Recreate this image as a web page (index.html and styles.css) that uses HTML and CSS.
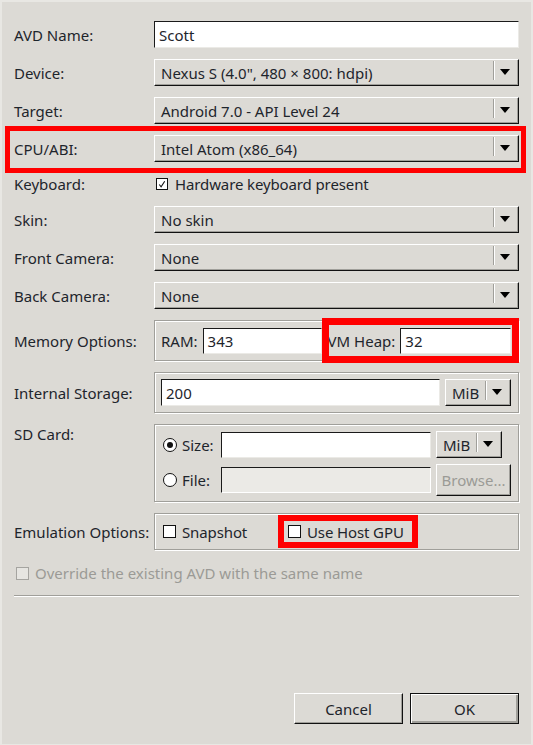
FILE: index.html
```html
<!DOCTYPE html>
<html>
<head>
<meta charset="utf-8">
<link rel="stylesheet" href="styles.css">
</head>
<body>
<div class="dialog">
  <div class="form">
    <div class="row h27">
      <span class="lbl">AVD Name:</span>
      <div class="field"><div class="input full">Scott</div></div>
    </div>
    <div class="row h27">
      <span class="lbl">Device:</span>
      <div class="field"><div class="combo"><span class="combo-text">Nexus S (4.0", 480 × 800: hdpi)</span><span class="combo-sep"></span><span class="combo-arrow"></span></div></div>
    </div>
    <div class="row h27">
      <span class="lbl">Target:</span>
      <div class="field"><div class="combo"><span class="combo-text">Android 7.0 - API Level 24</span><span class="combo-sep"></span><span class="combo-arrow"></span></div></div>
    </div>
    <div class="row h27 mark mark-cpu">
      <span class="lbl">CPU/ABI:</span>
      <div class="field"><div class="combo"><span class="combo-text">Intel Atom (x86_64)</span><span class="combo-sep"></span><span class="combo-arrow"></span></div></div>
    </div>
    <div class="row h22">
      <span class="lbl">Keyboard:</span>
      <div class="field check-field">
        <span class="cb kb"><svg width="11" height="11" viewBox="0 0 11 11"><polyline points="2.5,5.5 4.5,8 8.5,2" fill="none" stroke="#111" stroke-width="1.2"/></svg></span>
        <span class="tight">Hardware keyboard present</span>
      </div>
    </div>
    <div class="row h27">
      <span class="lbl">Skin:</span>
      <div class="field"><div class="combo"><span class="combo-text">No skin</span><span class="combo-sep"></span><span class="combo-arrow"></span></div></div>
    </div>
    <div class="row h27">
      <span class="lbl">Front Camera:</span>
      <div class="field"><div class="combo"><span class="combo-text">None</span><span class="combo-sep"></span><span class="combo-arrow"></span></div></div>
    </div>
    <div class="row h27">
      <span class="lbl">Back Camera:</span>
      <div class="field"><div class="combo"><span class="combo-text">None</span><span class="combo-sep"></span><span class="combo-arrow"></span></div></div>
    </div>
    <div class="row">
      <span class="lbl">Memory Options:</span>
      <div class="field group mem">
        <span>RAM:</span>
        <div class="input ram">343</div>
        <div class="vm mark mark-vm">
          <span>VM Heap:</span>
          <div class="input grow">32</div>
        </div>
      </div>
    </div>
    <div class="row">
      <span class="lbl">Internal Storage:</span>
      <div class="field group store">
        <div class="input h27i grow">200</div>
        <div class="combo small"><span class="combo-text">MiB</span><span class="combo-sep"></span><span class="combo-arrow"></span></div>
      </div>
    </div>
    <div class="row row-top">
      <span class="lbl">SD Card:</span>
      <div class="field group sd">
        <div class="opt"><span class="radio on"></span><span>Size:</span></div>
        <div class="input">&nbsp;</div>
        <div class="combo small"><span class="combo-text">MiB</span><span class="combo-sep"></span><span class="combo-arrow"></span></div>
        <div class="opt"><span class="radio"></span><span>File:</span></div>
        <div class="input disabled">&nbsp;</div>
        <div class="btn browse">Browse...</div>
      </div>
    </div>
    <div class="row">
      <span class="lbl">Emulation Options:</span>
      <div class="field group emu">
        <div class="opt snap"><span class="cb"></span><span class="tight">Snapshot</span></div>
        <div class="opt gpu mark mark-gpu"><span class="cb"></span><span class="tight">Use Host GPU</span></div>
      </div>
    </div>
    <div class="row h24 override">
      <span class="cb off"></span><span>Override the existing AVD with the same name</span>
    </div>
  </div>
  <div class="separator"></div>
  <div class="footer">
    <div class="btn">Cancel</div>
    <div class="btn default">OK</div>
  </div>
</div>
</body>
</html>
```

FILE: styles.css
```css
* { box-sizing: border-box; }
html, body { margin: 0; padding: 0; }
body {
  background: #dcdad5;
  font-family: "Noto Sans", "Open Sans", sans-serif;
  font-size: 15px;
  line-height: 20px;
  color: #1e252c;
}
.dialog {
  width: 533px;
  height: 745px;
  display: flex;
  flex-direction: column;
  border: 2px solid #e8e7e3;
  border-bottom-width: 1px;
  padding: 19px 12px 20px 12px;
}
.form { display: flex; flex-direction: column; gap: 11px; }
.row { display: flex; align-items: center; position: relative; }
.row-top { align-items: flex-start; }
.h27 { height: 27px; }
.h22 { height: 22px; }
.h24 { height: 24px; }
.lbl { width: 140px; flex: none; white-space: nowrap; }
.field { width: 365px; flex: none; }
.tight { letter-spacing: -0.12px; }

.input {
  height: 26px;
  background: #fff;
  border: 1px solid;
  border-color: #1a1a1a #ebeae6 #ebeae6 #1a1a1a;
  padding: 0 4px;
  display: flex;
  align-items: center;
  white-space: nowrap;
}
.input.full { height: 27px; }
.input.h27i { height: 27px; }
.input.disabled { background: #ebeae6; border-color: #1a1a1a #fff #fff #1a1a1a; }
.grow { flex: 1; min-width: 0; }

.combo {
  height: 27px;
  display: flex;
  align-items: center;
  background: #dcdad5;
  border: 1px solid;
  border-color: #fff #111 #111 #fff;
  box-shadow: inset -1px -1px 0 #a09f9a;
  padding-left: 6px;
}
.combo-text { flex: 1; white-space: nowrap; }
.combo-sep {
  width: 2px;
  height: 19px;
  align-self: flex-start;
  margin-top: 1px;
  border-left: 1px solid #a09f9a;
  border-right: 1px solid #fff;
  margin-right: 5px;
}
.combo-arrow {
  width: 0;
  height: 0;
  border-left: 5px solid transparent;
  border-right: 5px solid transparent;
  border-top: 6px solid #000;
  margin-right: 8px;
  margin-bottom: 2px;
}
.combo.small { width: 66px; flex: none; }

.check-field { display: flex; align-items: center; gap: 7px; padding-left: 2px; }
.cb {
  width: 13px;
  height: 13px;
  flex: none;
  background: #fff;
  border: 1px solid #111;
  display: inline-flex;
  align-items: center;
  justify-content: center;
}
.cb.kb { width: 12px; height: 12px; background: #fff; }
.cb.off { border-color: #a5a4a0; background: #e6e5e1; }

.radio {
  width: 14px;
  height: 14px;
  flex: none;
  border-radius: 50%;
  border: 1px solid #111;
  background: #fff;
  display: inline-flex;
  align-items: center;
  justify-content: center;
}
.radio.on::after {
  content: "";
  width: 6px;
  height: 6px;
  border-radius: 50%;
  background: #111;
}

.group {
  border: 1px solid #a09f9a;
  box-shadow: inset 1px 1px 0 #fff, 1px 1px 0 #fff;
  display: flex;
  align-items: center;
}
.mem { height: 41px; padding: 0 7px 0 6px; gap: 5px; }
.mem .ram { width: 119px; flex: none; }
.vm { flex: 1; display: flex; align-items: center; gap: 5px; margin-left: 1px; position: relative; }
.store { height: 41px; padding: 0 7px 0 6px; gap: 5px; }
.sd {
  height: 78px;
  display: grid;
  grid-template-columns: 53px 210px auto;
  grid-template-rows: 27px 32px;
  column-gap: 5px;
  row-gap: 6px;
  align-items: center;
  justify-items: start;
  padding: 6px 7px 5px 8px;
}
.sd .input { width: 210px; }
.opt { display: flex; align-items: center; gap: 5px; white-space: nowrap; }
.emu { height: 37px; padding-left: 8px; }
.emu .opt { gap: 6px; }
.snap { width: 125px; }
.gpu { position: relative; height: 20px; }

.override { color: #9b9a96; padding-left: 2px; gap: 6px; }

.btn {
  width: 109px;
  height: 31px;
  display: flex;
  align-items: center;
  justify-content: center;
  background: #dcdad5;
  border: 1px solid;
  border-color: #fff #111 #111 #fff;
  box-shadow: inset -1px -1px 0 #a09f9a;
}
.btn.default {
  border: 1px solid #111;
  box-shadow: inset 1px 1px 0 #fff, inset -2px -2px 0 #a09f9a;
}
.btn.browse { width: 75px; height: 32px; color: #9b9a96; }

.separator {
  margin-top: 10px;
  height: 2px;
  border-top: 1px solid #a09f9a;
  border-bottom: 1px solid #fff;
}
.footer {
  margin-top: auto;
  display: flex;
  justify-content: flex-end;
  gap: 7px;
}

.mark::after {
  content: "";
  position: absolute;
  border: 5px solid #f00;
  pointer-events: none;
}
.mark-cpu::after { top: -9px; left: -9px; right: -7px; bottom: -11px; }
.mark-vm::after { top: -10px; left: -6px; right: -8px; bottom: -9px; border-width: 7px; }
.mark-gpu::after { top: -7px; left: -10px; right: -14px; bottom: -6px; border-width: 6px; }
```
